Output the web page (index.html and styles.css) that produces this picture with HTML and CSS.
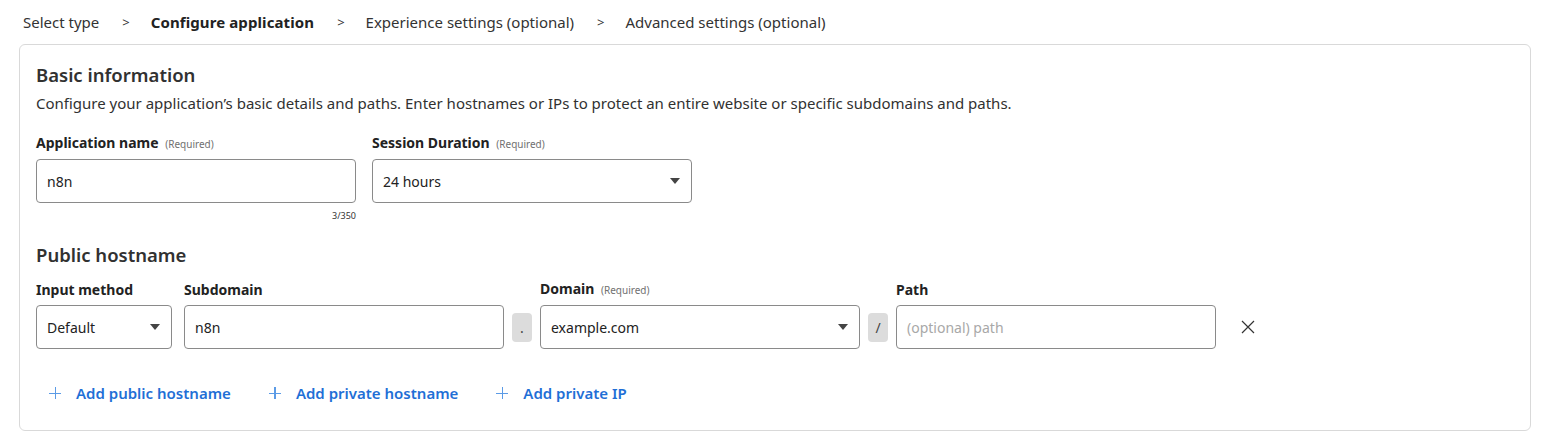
FILE: index.html
```html
<!DOCTYPE html>
<html lang="en">
<head>
<meta charset="utf-8">
<title>Configure application</title>
<link rel="stylesheet" href="styles.css">
</head>
<body>
<nav class="steps">
  <span class="step">Select type</span>
  <span class="sep">&gt;</span>
  <span class="step current">Configure application</span>
  <span class="sep">&gt;</span>
  <span class="step">Experience settings (optional)</span>
  <span class="sep">&gt;</span>
  <span class="step">Advanced settings (optional)</span>
</nav>

<section class="card">
  <h2 class="title">Basic information</h2>
  <p class="desc">Configure your application’s basic details and paths. Enter hostnames or IPs to protect an entire website or specific subdomains and paths.</p>

  <div class="basic-row">
    <div class="field">
      <label class="label">Application name <span class="req">(Required)</span></label>
      <div class="input"><span class="value">n8n</span></div>
      <div class="counter">3/350</div>
    </div>
    <div class="field">
      <label class="label">Session Duration <span class="req">(Required)</span></label>
      <div class="input select"><span class="value">24 hours</span><span class="caret"></span></div>
    </div>
  </div>

  <h2 class="title title-host">Public hostname</h2>

  <div class="host-grid">
    <label class="label">Input method</label>
    <label class="label">Subdomain</label>
    <span></span>
    <label class="label">Domain <span class="req">(Required)</span></label>
    <span></span>
    <label class="label">Path</label>
    <span></span>

    <div class="input select method"><span class="value">Default</span><span class="caret"></span></div>
    <div class="input"><span class="value">n8n</span></div>
    <span class="chip">.</span>
    <div class="input select"><span class="value">example.com</span><span class="caret"></span></div>
    <span class="chip">/</span>
    <div class="input"><span class="placeholder">(optional) path</span></div>
    <button class="remove" aria-label="Remove">
      <svg viewBox="0 0 14 14" width="14" height="14"><path d="M1 1L13 13M13 1L1 13" stroke="#333" stroke-width="1.2" fill="none"/></svg>
    </button>
  </div>

  <div class="actions">
    <button class="add"><span class="plus"></span>Add public hostname</button>
    <button class="add"><span class="plus"></span>Add private hostname</button>
    <button class="add"><span class="plus"></span>Add private IP</button>
  </div>
</section>
</body>
</html>
```

FILE: styles.css
```css
* { box-sizing: border-box; }

body {
  margin: 0;
  padding: 0 16px 0 19px;
  font-family: "Noto Sans", "Open Sans", sans-serif;
  color: #313131;
  background: #fff;
}

.steps {
  display: flex;
  align-items: center;
  height: 44px;
  padding-left: 4px;
  font-size: 15px;
  color: #333;
}
.step { white-space: nowrap; }
.step.current { font-weight: 700; color: #222; letter-spacing: 0.1px; }
.sep { padding: 0 21px 0 23px; font-size: 13px; }

.card {
  border: 1px solid #d9d9d9;
  border-radius: 6px;
  padding: 18px 16px 19px 16px;
  width: 1512px;
}

.title {
  margin: 0;
  font-size: 18.5px;
  font-weight: 600;
  line-height: 24px;
  color: #313131;
}
.desc {
  margin: 5px 0 0;
  font-size: 15px;
  line-height: 22px;
}

.basic-row {
  display: flex;
  gap: 16px;
  margin-top: 19px;
}
.field { width: 320px; display: flex; flex-direction: column; }

.label {
  display: block;
  font-size: 14px;
  font-weight: 700;
  line-height: 20px;
  color: #222;
  margin-bottom: 5px;
  white-space: nowrap;
}
.req {
  font-size: 10px;
  font-weight: 400;
  color: #707070;
  margin-left: 3px;
}

.input {
  height: 44px;
  border: 1px solid #8a8a8a;
  border-radius: 4px;
  display: flex;
  align-items: center;
  padding: 0 10px;
  font-size: 14px;
  color: #222;
  background: #fff;
}
.select { justify-content: space-between; }
.caret {
  width: 0; height: 0;
  border-left: 5px solid transparent;
  border-right: 5px solid transparent;
  border-top: 6px solid #444;
  margin-right: 1px;
}
.placeholder { color: #a8a8a8; }

.counter {
  text-align: right;
  font-size: 9px;
  color: #333;
  margin-top: 7px;
  line-height: 12px;
}

.title-host { margin-top: 21px; }

.host-grid {
  display: grid;
  grid-template-columns: 140px 320px 20px 320px 20px 320px 64px;
  column-gap: 8px;
  margin-top: 12px;
  align-items: center;
}
.host-grid .label { align-self: end; }
.method { width: 136px; }
.chip {
  height: 29px;
  width: 20px;
  background: #dcdcdc;
  border-radius: 4px;
  display: flex;
  align-items: center;
  justify-content: center;
  font-size: 14px;
  color: #444;
}
.remove {
  border: 0;
  background: none;
  padding: 0;
  width: 14px;
  height: 14px;
  margin-left: 17px;
  cursor: pointer;
}
.remove svg { display: block; }

.actions {
  display: flex;
  margin-top: 26px;
}
.add {
  display: flex;
  align-items: center;
  gap: 15px;
  border: 0;
  background: none;
  font-family: inherit;
  font-size: 15px;
  font-weight: 600;
  color: #1f6fd6;
  height: 36px;
  padding: 0 20px 0 13px;
  margin-right: 5px;
  cursor: pointer;
}
.plus {
  position: relative;
  width: 12px;
  height: 12px;
}
.plus::before, .plus::after {
  content: "";
  position: absolute;
  background: #5b9be6;
}
.plus::before { left: 0; top: 5.5px; width: 12px; height: 1.4px; }
.plus::after { left: 5.5px; top: 0; width: 1.4px; height: 12px; }
```
